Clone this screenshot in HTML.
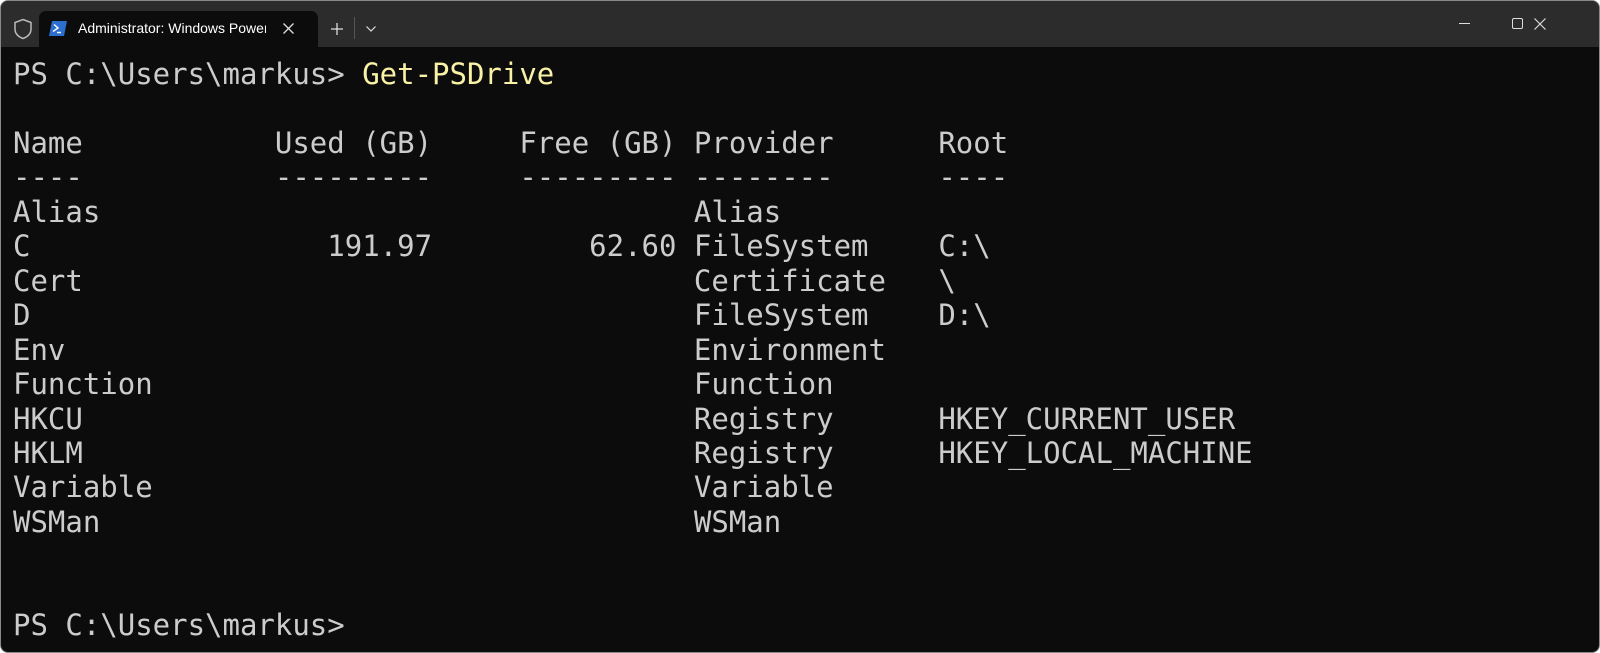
<!DOCTYPE html>
<html><head><style>
html,body{margin:0;padding:0;background:#fff;}
.win{position:absolute;left:0;top:0;width:1598px;height:651px;border:1px solid #8a8a8a;border-radius:8px;background:#0c0c0c;overflow:hidden;}
.bar{position:absolute;left:0;top:0;width:100%;height:46px;background:#2c2c2c;}
.tab{position:absolute;left:38px;top:10px;width:279px;height:36px;background:#0c0c0c;border-radius:7px 7px 0 0;}
.tabt{position:absolute;left:77px;top:19px;font:14px "Liberation Sans",sans-serif;color:#fff;white-space:nowrap;width:188px;overflow:hidden;}
pre{position:absolute;left:12px;top:56px;margin:0;font-family:"DejaVu Sans Mono",monospace;font-size:29px;line-height:34.45px;color:#cccccc;}
.y{color:#f9f1a5;}
</style></head><body>
<div class="win">
<div class="bar">
<svg style="position:absolute;left:12px;top:17px" width="20" height="22" viewBox="0 0 20 22"><path d="M10 1.5 L18 4.5 V11 C18 16 14 19 10 20.5 C6 19 2 16 2 11 V4.5 Z" fill="none" stroke="#bbb" stroke-width="1.5"/></svg>
<div class="tab"></div>
<svg style="position:absolute;left:48px;top:20px" width="18" height="15" viewBox="0 0 18 15"><path d="M3 0 H18 L15 15 H0 Z" fill="#2c6fd0"/><path d="M5 3.5 L9 7 L4 10.5" stroke="#fff" stroke-width="1.4" fill="none"/><path d="M8 11.5 H12" stroke="#fff" stroke-width="1.4"/></svg>
<div class="tabt">Administrator: Windows PowerShell</div>
<svg style="position:absolute;left:282px;top:22px" width="11" height="11"><path d="M0.5 0.5 L10.5 10.5 M10.5 0.5 L0.5 10.5" stroke="#ddd" stroke-width="1.3"/></svg>
<svg style="position:absolute;left:330px;top:22px" width="12" height="12"><path d="M6 0 V12 M0 6 H12" stroke="#ddd" stroke-width="1.3"/></svg>
<div style="position:absolute;left:353px;top:16px;width:1px;height:22px;background:#555"></div>
<svg style="position:absolute;left:365px;top:25px" width="10" height="6"><path d="M0.5 0.5 L5 5 L9.5 0.5" stroke="#ddd" stroke-width="1.2" fill="none"/></svg>
<div style="position:absolute;left:1458px;top:22px;width:11px;height:1px;background:#ddd"></div>
<div style="position:absolute;left:1511px;top:17px;width:9px;height:9px;border:1.3px solid #ddd;border-radius:2px"></div>
<svg style="position:absolute;left:1533px;top:17px" width="12" height="12"><path d="M0.5 0.5 L11.5 11.5 M11.5 0.5 L0.5 11.5" stroke="#ddd" stroke-width="1.2"/></svg>
</div>
<pre>PS C:\Users\markus&gt; <span class="y">Get-PSDrive</span>

Name           Used (GB)     Free (GB) Provider      Root
----           ---------     --------- --------      ----
Alias                                  Alias
C                 191.97         62.60 FileSystem    C:\
Cert                                   Certificate   \
D                                      FileSystem    D:\
Env                                    Environment
Function                               Function
HKCU                                   Registry      HKEY_CURRENT_USER
HKLM                                   Registry      HKEY_LOCAL_MACHINE
Variable                               Variable
WSMan                                  WSMan


PS C:\Users\markus&gt;</pre>
</div>
</body></html>
